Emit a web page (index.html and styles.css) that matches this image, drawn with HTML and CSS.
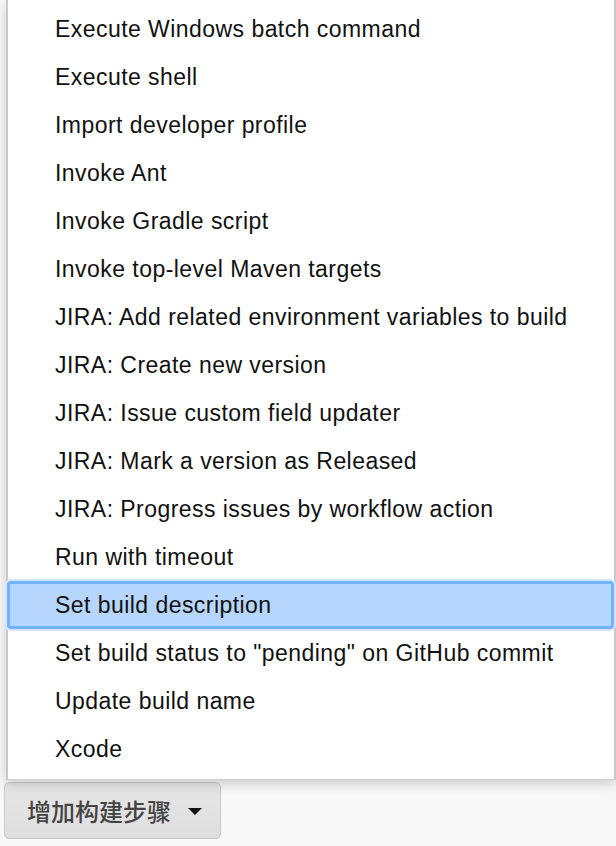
FILE: index.html
```html
<!DOCTYPE html>
<html>
<head>
<meta charset="utf-8">
<link rel="stylesheet" href="styles.css">
</head>
<body>
<div class="page">
  <ul class="menu">
    <li class="item">Execute Windows batch command</li>
    <li class="item">Execute shell</li>
    <li class="item">Import developer profile</li>
    <li class="item">Invoke Ant</li>
    <li class="item">Invoke Gradle script</li>
    <li class="item">Invoke top-level Maven targets</li>
    <li class="item">JIRA: Add related environment variables to build</li>
    <li class="item">JIRA: Create new version</li>
    <li class="item">JIRA: Issue custom field updater</li>
    <li class="item">JIRA: Mark a version as Released</li>
    <li class="item">JIRA: Progress issues by workflow action</li>
    <li class="item">Run with timeout</li>
    <li class="item selected">Set build description</li>
    <li class="item">Set build status to "pending" on GitHub commit</li>
    <li class="item">Update build name</li>
    <li class="item">Xcode</li>
  </ul>
  <button class="add-btn" type="button">
    <span class="add-label">增加构建步骤</span>
    <span class="caret"></span>
  </button>
</div>
</body>
</html>
```

FILE: styles.css
```css
html, body {
  margin: 0;
  padding: 0;
}
body {
  background: #f8f8f8;
  width: 616px;
  height: 846px;
  overflow: hidden;
  font-family: "Liberation Sans", Arial, sans-serif;
}
.page {
  display: flex;
  flex-direction: column;
  align-items: flex-start;
}
.menu {
  list-style: none;
  margin: 0 0 0 6px;
  padding: 5px 0 6px 0;
  width: 606px;
  background: #fff;
  border-left: 2px solid #c9c9c9;
  border-right: 2px solid #c9c9c9;
  border-bottom: 1px solid #cfcfcf;
  box-shadow: 0 4px 12px rgba(0, 0, 0, 0.18);
  position: relative;
  z-index: 2;
}
.item {
  height: 48px;
  display: flex;
  align-items: center;
  padding: 1px 0 0 47px;
  font-size: 23px;
  letter-spacing: 0.45px;
  color: #111;
  box-sizing: border-box;
}
.item.selected {
  margin: 0 0 0 -1px;
  padding: 1px 0 0 45px;
  background: #b6d6fd;
  border: 3px solid #72b2fa;
  border-radius: 4px;
  box-shadow: 0 0 0 2px #d3e6fd;
}
.add-btn {
  margin: 2px 0 0 4px;
  width: 217px;
  height: 57px;
  display: flex;
  align-items: center;
  padding: 0 0 0 22px;
  box-sizing: border-box;
  background: linear-gradient(#e6e6e6, #dedede);
  border: 1px solid #c9c9c9;
  border-radius: 5px;
  font-family: "Noto Sans CJK SC", "Liberation Sans", sans-serif;
  font-size: 24px;
  font-weight: 500;
  color: #444;
  position: relative;
  z-index: 1;
}
.add-label {
  line-height: 1;
}
.caret {
  margin-left: 17px;
  width: 0;
  height: 0;
  border-left: 7px solid transparent;
  border-right: 7px solid transparent;
  border-top: 7px solid #111;
  margin-top: 2px;
}
```
